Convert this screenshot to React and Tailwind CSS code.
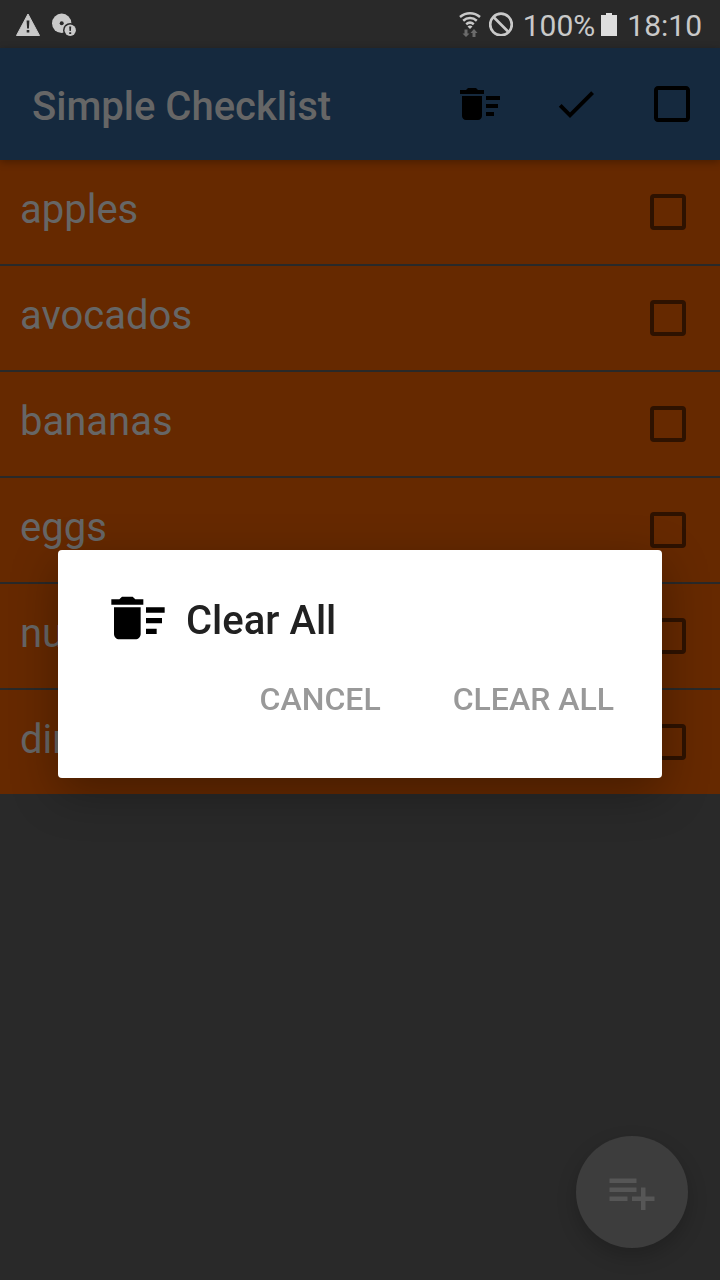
import React from "react";

const items = ["apples", "avocados", "bananas", "eggs", "nuts", "dinner rolls"];

function SweepIcon({ className }) {
  return (
    <svg viewBox="0 0 24 24" className={className} fill="currentColor" aria-hidden="true">
      <path d="M15 16h4v2h-4zm0-8h7v2h-7zm0 4h6v2h-6zM3 18c0 1.1.9 2 2 2h6c1.1 0 2-.9 2-2V8H3v10zM14 5h-3l-1-1H6L5 5H2v2h12z" />
    </svg>
  );
}

function StatusBar() {
  return (
    <div className="flex h-12 items-center justify-between bg-[#292929] pr-[18px] pl-4 text-[#c9c9c9]">
      <div className="flex items-center gap-3">
        <svg viewBox="0 0 24 24" className="size-6" aria-hidden="true">
          <path d="M12 2 23.500 23.500H.5z" fill="currentColor" stroke="currentColor" strokeLinejoin="round" />
          <path d="M10.600 8.500h2.800l-.5 8h-1.800zM10.700 18h2.600v2.500h-2.600z" fill="#292929" />
        </svg>
        <svg viewBox="0 0 24 24" className="size-6" aria-hidden="true">
          <circle cx="9.700" cy="11.300" r="9.700" fill="currentColor" />
          <circle cx="9.700" cy="11.300" r="2" fill="#292929" />
          <circle cx="18.200" cy="18.200" r="7.200" fill="#292929" />
          <circle cx="18.200" cy="18.200" r="5.700" fill="currentColor" />
          <path d="M17.200 14.400h2l-.3 4.700h-1.400zM17.200 20.200h2v1.900h-2z" fill="#292929" />
        </svg>
      </div>
      <div className="flex items-center">
        <svg viewBox="0 0 22 26" className="mr-2 h-[26px] w-[22px]" fill="none" stroke="currentColor" strokeWidth="2.500" aria-hidden="true">
          <path d="M1 6C7 1 15 1 21 6M4.200 9.700c4-3.500 9.600-3.500 13.600 0M7.200 13.200c2.400-2 5.200-2 7.600 0" />
          <path d="M8.500 15.400q2.500-1.600 5 0L11 18z" fill="currentColor" stroke="none" />
          <path d="M5.500 18.500h3v4h2L7 26 3.500 22.500h2zM13.500 26h3v-4h2L15 18 11.500 22h2z" fill="#6b6b6b" stroke="none" />
        </svg>
        <svg viewBox="0 0 24 24" className="mr-[10px] size-6" fill="none" stroke="currentColor" strokeWidth="2.700" aria-hidden="true">
          <circle cx="12" cy="12.500" r="10.800" />
          <path d="m4.500 5 15 15" />
        </svg>
        <span className="pt-1 text-[30px] leading-none">100%</span>
        <svg viewBox="0 0 16 24" className="mr-[10px] ml-[6px] h-6 w-4" fill="#dedede" aria-hidden="true">
          <path d="M5 1h6v2h5v21H0V3h5z" />
        </svg>
        <span className="pt-1 text-[30px] leading-none">18:10</span>
      </div>
    </div>
  );
}

export default function App() {
  return (
    <div className="flex min-h-screen flex-col bg-[#292929] font-[Roboto,sans-serif]">
      <StatusBar />
      <header className="relative flex h-28 items-center justify-between bg-[#15293e] pr-6 pl-8 shadow-[0_2px_8px_rgba(0,0,0,0.3)]">
        <h1 className="pt-1.5 text-[40px] leading-[48px] font-medium text-[#666666]">Simple Checklist</h1>
        <div className="flex gap-12 text-black">
          <button type="button" aria-label="Clear all items">
            <SweepIcon className="size-12" />
          </button>
          <button type="button" aria-label="Check all items">
            <svg viewBox="0 0 24 24" className="size-12" fill="currentColor" aria-hidden="true">
              <path d="M9 16.200 4.800 12l-1.400 1.400L9 19 21 7l-1.400-1.400z" />
            </svg>
          </button>
          <button type="button" aria-label="Uncheck all items">
            <svg viewBox="0 0 24 24" className="size-12" fill="currentColor" aria-hidden="true">
              <path d="M19 5v14H5V5h14m0-2H5c-1.100 0-2 .9-2 2v14c0 1.100.9 2 2 2h14c1.100 0 2-.9 2-2V5c0-1.100-.9-2-2-2z" />
            </svg>
          </button>
        </div>
      </header>

      <ul>
        {items.map((item) => (
          <li key={item} className="border-b-2 border-[#292929] bg-[#662900]">
            <label className="flex h-[104px] items-center justify-between pr-[34px] pl-5">
              <span className="pb-1 text-[40px] leading-[48px] text-[#666666]">{item}</span>
              <input type="checkbox" className="size-9 appearance-none rounded border-4 border-[#2e1200]" />
            </label>
          </li>
        ))}
      </ul>

      <button
        type="button"
        aria-label="Add item"
        className="fixed right-8 bottom-8 flex size-28 items-center justify-center rounded-full bg-[#3d3d3d] text-[#565656] shadow-[0_8px_20px_rgba(0,0,0,0.2)]"
      >
        <svg viewBox="0 0 24 24" className="size-[54px]" fill="currentColor" aria-hidden="true">
          <path d="M14 10H2v2h12v-2zm0-4H2v2h12V6zm4 8v-4h-2v4h-4v2h4v4h2v-4h4v-2h-4zM2 16h8v-2H2v2z" />
        </svg>
      </button>

      <div className="fixed inset-0 top-12 flex items-center px-[58px]">
        <div
          role="dialog"
          aria-modal="true"
          aria-labelledby="dialog-title"
          className="w-full rounded bg-white px-12 pt-9 pb-12 shadow-[0_14px_48px_rgba(0,0,0,0.32)]"
        >
          <div className="flex items-center gap-4">
            <SweepIcon className="size-16 text-black" />
            <h2 id="dialog-title" className="pt-1.5 text-[40px] leading-[48px] font-medium text-[#212121]">
              Clear All
            </h2>
          </div>
          <div className="mt-4 flex h-16 items-center justify-end gap-[72px] pt-0.5 text-[32px] leading-[38px] font-medium text-[#999999]">
            <button type="button">CANCEL</button>
            <button type="button">CLEAR ALL</button>
          </div>
        </div>
      </div>
    </div>
  );
}
